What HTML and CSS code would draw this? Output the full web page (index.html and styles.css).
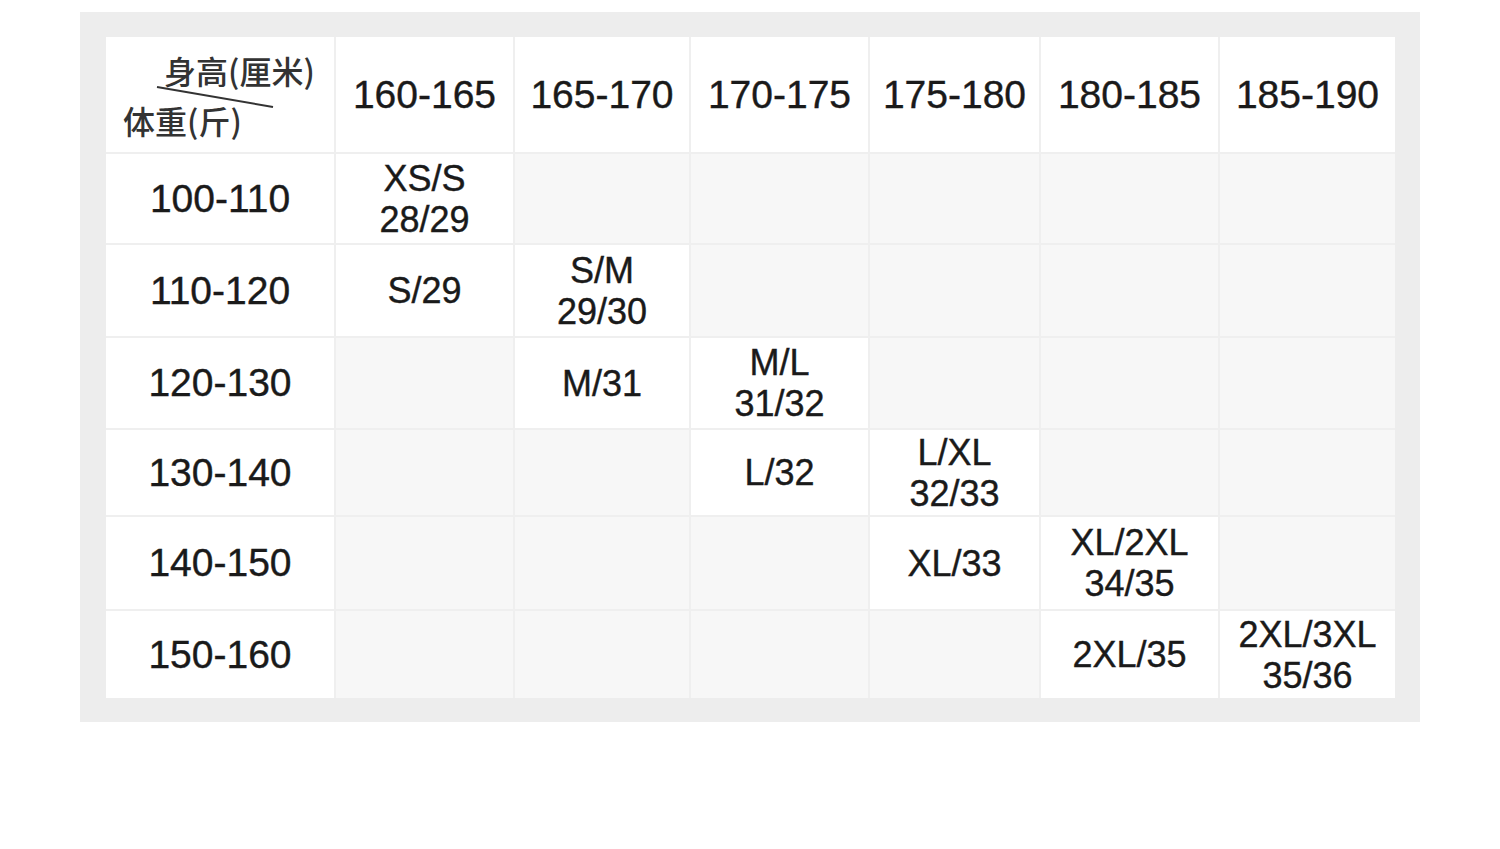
FILE: index.html
```html
<!DOCTYPE html>
<html lang="zh">
<head>
<meta charset="utf-8">
<title>尺码表</title>
<link rel="stylesheet" href="styles.css">
</head>
<body>
<div class="frame">
  <div class="chart">
    <div class="cell corner">
      <span class="corner-top">身高(厘米)</span>
      <span class="corner-bottom">体重(斤)</span>
      <svg class="diag" width="228" height="115" viewBox="0 0 228 115"><line x1="51" y1="50" x2="167" y2="70" stroke="#333" stroke-width="2"/></svg>
    </div>
    <div class="cell head">160-165</div>
    <div class="cell head">165-170</div>
    <div class="cell head">170-175</div>
    <div class="cell head">175-180</div>
    <div class="cell head">180-185</div>
    <div class="cell head">185-190</div>

    <div class="cell label">100-110</div>
    <div class="cell size">XS/S<br>28/29</div>
    <div class="cell empty"></div>
    <div class="cell empty"></div>
    <div class="cell empty"></div>
    <div class="cell empty"></div>
    <div class="cell empty"></div>

    <div class="cell label">110-120</div>
    <div class="cell size">S/29</div>
    <div class="cell size">S/M<br>29/30</div>
    <div class="cell empty"></div>
    <div class="cell empty"></div>
    <div class="cell empty"></div>
    <div class="cell empty"></div>

    <div class="cell label">120-130</div>
    <div class="cell empty"></div>
    <div class="cell size">M/31</div>
    <div class="cell size">M/L<br>31/32</div>
    <div class="cell empty"></div>
    <div class="cell empty"></div>
    <div class="cell empty"></div>

    <div class="cell label">130-140</div>
    <div class="cell empty"></div>
    <div class="cell empty"></div>
    <div class="cell size">L/32</div>
    <div class="cell size">L/XL<br>32/33</div>
    <div class="cell empty"></div>
    <div class="cell empty"></div>

    <div class="cell label">140-150</div>
    <div class="cell empty"></div>
    <div class="cell empty"></div>
    <div class="cell empty"></div>
    <div class="cell size">XL/33</div>
    <div class="cell size">XL/2XL<br>34/35</div>
    <div class="cell empty"></div>

    <div class="cell label">150-160</div>
    <div class="cell empty"></div>
    <div class="cell empty"></div>
    <div class="cell empty"></div>
    <div class="cell empty"></div>
    <div class="cell size">2XL/35</div>
    <div class="cell size">2XL/3XL<br>35/36</div>
  </div>
</div>
</body>
</html>
```
FILE: styles.css
```css
html, body {
  margin: 0;
  padding: 0;
  background: #ffffff;
}
body {
  width: 1500px;
  height: 849px;
  overflow: hidden;
  font-family: "Liberation Sans", "Noto Sans CJK SC", sans-serif;
  color: #1a1a1a;
}
.frame {
  margin: 12px 0 0 80px;
  width: 1340px;
  height: 710px;
  box-sizing: border-box;
  padding: 25px 25px 24px 26px;
  background: #ededed;
}
.chart {
  display: grid;
  grid-template-columns: 228px 177px 174px 177px 169px 177px 175px;
  grid-template-rows: 115px 89px 91px 90px 85px 92px 87px;
  gap: 2px;
  background: #efefef;
  width: 1289px;
  height: 661px;
}
.cell {
  background: #ffffff;
  display: flex;
  align-items: center;
  justify-content: center;
  text-align: center;
  -webkit-text-stroke: 0.4px #1a1a1a;
}
.cell.empty {
  background: #f7f7f7;
}
.head, .label {
  font-size: 39px;
}
.size {
  font-size: 36px;
  line-height: 41px;
}
.corner {
  position: relative;
  display: block;
  font-family: "Noto Sans CJK SC", sans-serif;
  font-size: 32px;
  font-weight: 500;
  color: #333333;
  -webkit-text-stroke: 0;
}
.corner-top {
  position: absolute;
  left: 58px;
  top: 12px;
  line-height: 42px;
}
.corner-bottom {
  position: absolute;
  left: 17px;
  top: 62px;
  line-height: 42px;
}
.diag {
  position: absolute;
  left: 0;
  top: 0;
}
```
